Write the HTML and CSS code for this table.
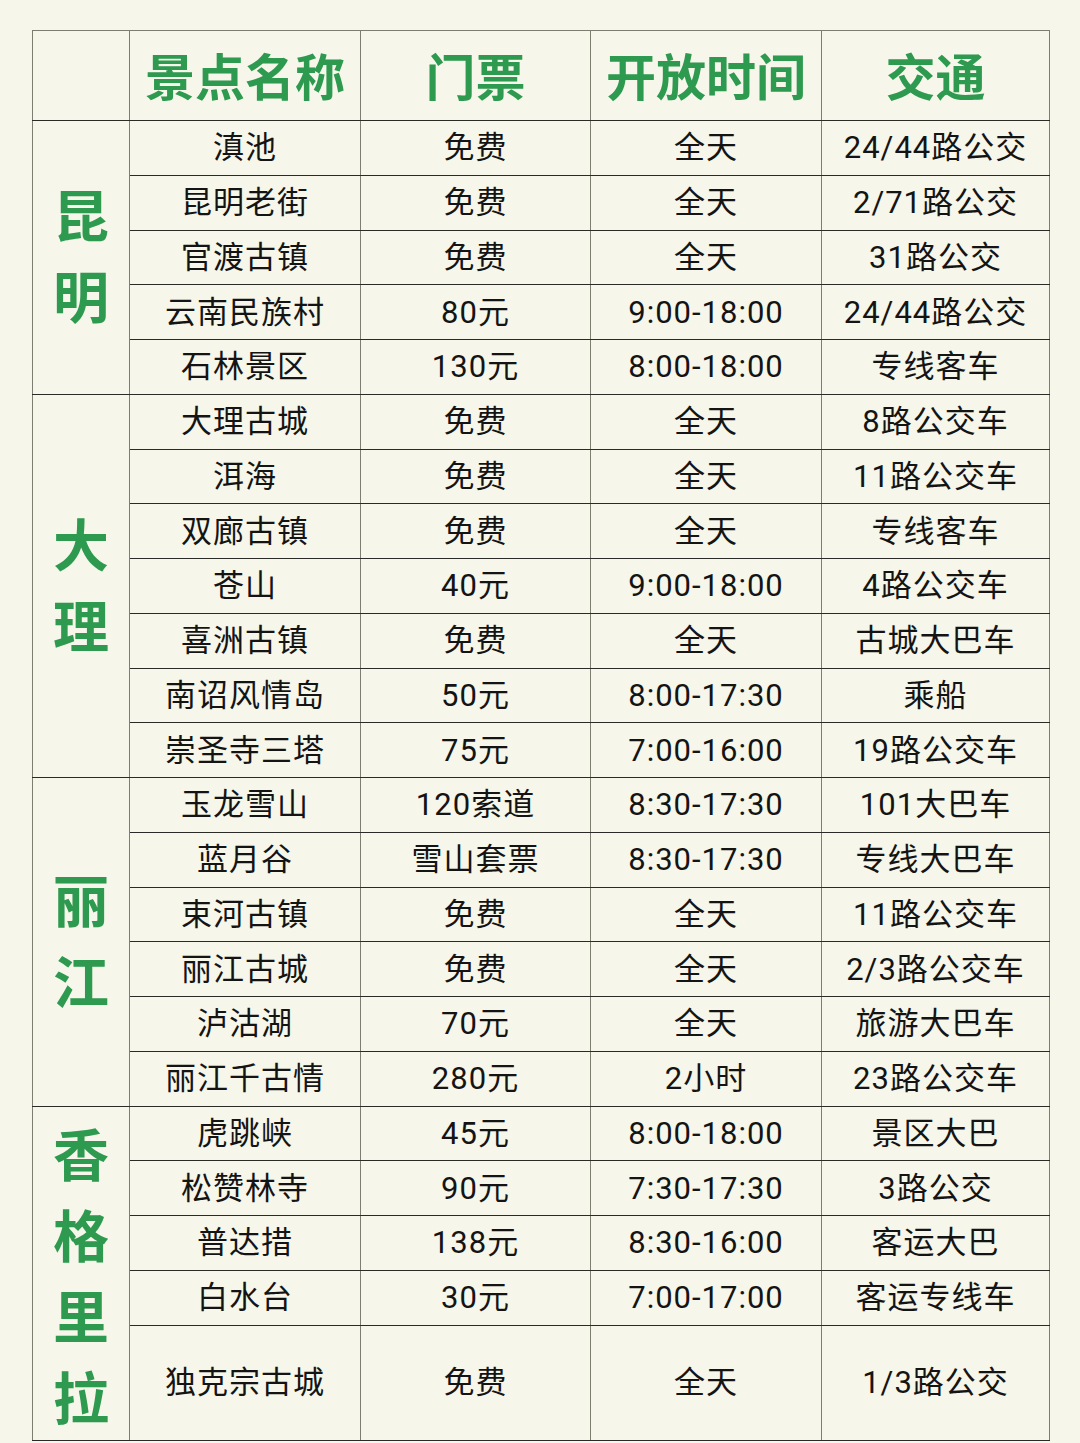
FILE: index.html
```html
<!DOCTYPE html>
<html lang="zh">
<head>
<meta charset="utf-8">
<link rel="stylesheet" href="styles.css">
</head>
<body>
<div class="page">
<table class="sheet">
<colgroup>
<col class="c-region"><col class="c-name"><col class="c-ticket"><col class="c-time"><col class="c-traffic">
</colgroup>
<thead>
<tr class="head">
<th></th><th>景点名称</th><th>门票</th><th>开放时间</th><th>交通</th>
</tr>
</thead>
<tbody class="grp">
<tr><td class="region short" rowspan="5">昆<br>明</td><td>滇池</td><td>免费</td><td>全天</td><td>24/44路公交</td></tr>
<tr><td>昆明老街</td><td>免费</td><td>全天</td><td>2/71路公交</td></tr>
<tr><td>官渡古镇</td><td>免费</td><td>全天</td><td>31路公交</td></tr>
<tr><td>云南民族村</td><td>80元</td><td>9:00-18:00</td><td>24/44路公交</td></tr>
<tr><td>石林景区</td><td>130元</td><td>8:00-18:00</td><td>专线客车</td></tr>
</tbody>
<tbody class="grp">
<tr><td class="region short" rowspan="7">大<br>理</td><td>大理古城</td><td>免费</td><td>全天</td><td>8路公交车</td></tr>
<tr><td>洱海</td><td>免费</td><td>全天</td><td>11路公交车</td></tr>
<tr><td>双廊古镇</td><td>免费</td><td>全天</td><td>专线客车</td></tr>
<tr><td>苍山</td><td>40元</td><td>9:00-18:00</td><td>4路公交车</td></tr>
<tr><td>喜洲古镇</td><td>免费</td><td>全天</td><td>古城大巴车</td></tr>
<tr><td>南诏风情岛</td><td>50元</td><td>8:00-17:30</td><td>乘船</td></tr>
<tr><td>崇圣寺三塔</td><td>75元</td><td>7:00-16:00</td><td>19路公交车</td></tr>
</tbody>
<tbody class="grp">
<tr><td class="region short" rowspan="6">丽<br>江</td><td>玉龙雪山</td><td>120索道</td><td>8:30-17:30</td><td>101大巴车</td></tr>
<tr><td>蓝月谷</td><td>雪山套票</td><td>8:30-17:30</td><td>专线大巴车</td></tr>
<tr><td>束河古镇</td><td>免费</td><td>全天</td><td>11路公交车</td></tr>
<tr><td>丽江古城</td><td>免费</td><td>全天</td><td>2/3路公交车</td></tr>
<tr><td>泸沽湖</td><td>70元</td><td>全天</td><td>旅游大巴车</td></tr>
<tr><td>丽江千古情</td><td>280元</td><td>2小时</td><td>23路公交车</td></tr>
</tbody>
<tbody class="grp">
<tr><td class="region" rowspan="5">香<br>格<br>里<br>拉</td><td>虎跳峡</td><td>45元</td><td>8:00-18:00</td><td>景区大巴</td></tr>
<tr><td>松赞林寺</td><td>90元</td><td>7:30-17:30</td><td>3路公交</td></tr>
<tr><td>普达措</td><td>138元</td><td>8:30-16:00</td><td>客运大巴</td></tr>
<tr><td>白水台</td><td>30元</td><td>7:00-17:00</td><td>客运专线车</td></tr>
<tr class="tall"><td>独克宗古城</td><td>免费</td><td>全天</td><td>1/3路公交</td></tr>
</tbody>
</table>
</div>
</body>
</html>
```

FILE: styles.css
```css
html, body {
  margin: 0;
  padding: 0;
  background: #f6f6ea;
}
.page {
  width: 1080px;
  height: 1443px;
  overflow: hidden;
  padding: 30px 0 0 32px;
  box-sizing: border-box;
}
.sheet {
  border-collapse: collapse;
  table-layout: fixed;
  width: 1017px;
  font-family: Roboto, "Noto Sans CJK SC", sans-serif;
  color: #141414;
}
.c-region { width: 97px; }
.c-name { width: 231px; }
.c-ticket { width: 230px; }
.c-time { width: 231px; }
.c-traffic { width: 228px; }
.sheet th, .sheet td {
  padding: 0;
  text-align: center;
  border-left: 1.5px solid #7d7d70;
  border-right: 1.5px solid #7d7d70;
  border-top: 1.5px solid #2a2a26;
  border-bottom: 1.5px solid #2a2a26;
}
.head th {
  height: 86px;
  font-family: "Noto Sans CJK SC", sans-serif;
  font-size: 50px;
  font-weight: 700;
  color: #2e9a4f;
  padding-bottom: 3px;
  border-top-color: #7d7d70;
}
.sheet td {
  height: 53.75px;
  font-size: 31px;
  letter-spacing: 1px;
  line-height: 1;
}
.sheet td.region {
  font-family: "Noto Sans CJK SC", sans-serif;
  font-size: 56px;
  font-weight: 700;
  line-height: 81px;
  color: #2e9a4f;
  letter-spacing: 0;
}
.sheet td.region.short {
  padding-bottom: 8px;
}
.tall td {
  height: 114px;
}
```
